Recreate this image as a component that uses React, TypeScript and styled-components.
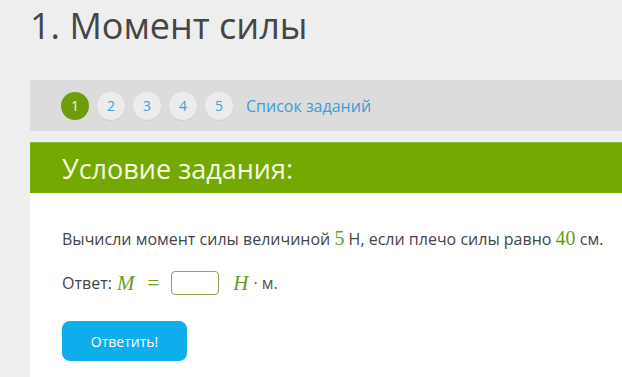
import React from "react";
import styled, { createGlobalStyle } from "styled-components";

const GlobalStyle = createGlobalStyle`
  html, body {
    margin: 0;
    padding: 0;
    background: #eeeeee;
    font-family: "Open Sans", "Liberation Sans", sans-serif;
    overflow: hidden;
  }
`;

const tasks = [1, 2, 3, 4, 5];

const App = () => {
  return (
    <Page>
      <GlobalStyle />
      <Title>1. Момент силы</Title>
      <Nav>
        {tasks.map((n) => (
          <Step key={n} active={n === 1}>
            {n}
          </Step>
        ))}
        <NavLink>Список заданий</NavLink>
      </Nav>
      <Card>
        <CardHeader>Условие задания:</CardHeader>
        <CardBody>
          <Line>
            Вычисли момент силы величиной <Num>5</Num> Н, если плечо силы равно{" "}
            <Num>40</Num> см.
          </Line>
          <AnswerLine>
            Ответ: <MathVar>M</MathVar>
            <Eq>=</Eq>
            <AnswerInput />
            <MathVar>H</MathVar>
            <Unit>· м.</Unit>
          </AnswerLine>
          <SubmitButton>Ответить!</SubmitButton>
        </CardBody>
      </Card>
    </Page>
  );
};

export default App;

const Page = styled.div`
  padding-left: 30px;
  width: 700px;
  height: 377px;
  overflow: hidden;
`;

const Title = styled.h1`
  margin: 0;
  padding-top: 3px;
  height: 77px;
  font-size: 36px;
  font-weight: 400;
  line-height: 46px;
  color: #454545;
`;

const Nav = styled.div`
  display: flex;
  align-items: center;
  gap: 8px;
  height: 51px;
  padding-left: 31px;
  background: #dcdcdc;
`;

const Step = styled.div<{ active?: boolean }>`
  width: 28px;
  height: 28px;
  border-radius: 50%;
  display: flex;
  align-items: center;
  justify-content: center;
  font-size: 14px;
  background: ${(p) => (p.active ? "#6d9e0a" : "#ececec")};
  color: ${(p) => (p.active ? "#f3f7c8" : "#3b9ed8")};
  box-shadow: ${(p) => (p.active ? "none" : "0 1px 1px rgba(0,0,0,0.06)")};
`;

const NavLink = styled.div`
  margin-left: 5px;
  font-size: 16px;
  color: #3a9cd8;
  cursor: pointer;
`;

const Card = styled.div`
  margin-top: 11px;
  background: #ffffff;
`;

const CardHeader = styled.div`
  height: 50px;
  display: flex;
  align-items: center;
  padding-left: 32px;
  background: #74a802;
  border-top: 1px solid #8cb93a;
  color: #f6f9e1;
  font-size: 27px;
`;

const CardBody = styled.div`
  padding: 33px 32px 20px;
`;

const Line = styled.div`
  font-size: 16px;
  line-height: 24px;
  color: #454545;
  white-space: nowrap;
`;

const Num = styled.span`
  font-family: "Liberation Serif", "DejaVu Serif", serif;
  font-size: 20px;
  color: #6a9a1c;
`;

const AnswerLine = styled.div`
  display: flex;
  align-items: center;
  margin-top: 20px;
  height: 24px;
  font-size: 16px;
  color: #454545;
`;

const MathVar = styled.span`
  font-family: "Liberation Serif", "DejaVu Serif", serif;
  font-style: italic;
  font-size: 21px;
  color: #6a9a1c;
  margin-left: 5px;
`;

const Eq = styled.span`
  font-family: "Liberation Serif", "DejaVu Serif", serif;
  font-size: 21px;
  color: #6a9a1c;
  margin: 0 12px 0 13px;
`;

const AnswerInput = styled.div`
  width: 46px;
  height: 22px;
  border: 1px solid #8aa850;
  border-radius: 4px;
  background: #fff;
  margin-right: 9px;
`;

const Unit = styled.span`
  margin-left: 5px;
  color: #555;
`;

const SubmitButton = styled.button`
  margin-top: 26px;
  width: 125px;
  height: 40px;
  border: none;
  border-radius: 8px;
  background: #0eaeed;
  color: #ffffff;
  font-family: "Open Sans", "Liberation Sans", sans-serif;
  font-size: 14px;
  cursor: pointer;
`;
